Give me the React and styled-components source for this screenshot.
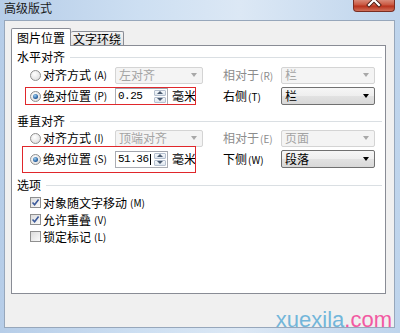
import React from "react"
import styled, { createGlobalStyle } from "styled-components"

const GlobalStyle = createGlobalStyle`
  html, body {
    margin: 0;
    padding: 0;
  }
  body {
    width: 400px;
    height: 333px;
    overflow: hidden;
    font-family: "Noto Sans CJK SC", "Liberation Sans", sans-serif;
    font-size: 12px;
    color: #000;
  }
`

const Window = styled.div`
  position: relative;
  width: 400px;
  height: 333px;
  box-sizing: border-box;
  display: flex;
  flex-direction: column;
  padding: 0 5px 5px 4px;
  overflow: hidden;
  background: linear-gradient(to right, #b6cde8, #cddff2 35%, #dce8f5 60%, #bed4ec);
`

const TitleBar = styled.div`
  display: flex;
  justify-content: space-between;
  align-items: flex-start;
  height: 20px;
`

const Title = styled.div`
  line-height: 16px;
  padding-top: 0;
  color: #1a1a1a;
`

const CloseButton = styled.div`
  width: 42px;
  height: 12px;
  box-sizing: border-box;
  border: 1px solid #7a2d22;
  border-top: none;
  border-radius: 0 0 4px 4px;
  background: linear-gradient(#d98a78, #c9563f 45%, #b8321c 55%, #d0705a);
  display: flex;
  justify-content: center;
  overflow: hidden;
`

const Body = styled.div`
  flex: 1;
  box-sizing: border-box;
  background: #f0f0f0;
  border: 1px solid #97a7bb;
  padding: 7px 0 0 6px;
`

const TabStrip = styled.div`
  position: relative;
  z-index: 1;
  display: flex;
  align-items: flex-end;
  height: 18px;
  margin-bottom: -1px;
`

const Tab = styled.div`
  box-sizing: border-box;
  height: ${p => (p.$active ? "18px" : "14px")};
  margin-bottom: ${p => (p.$active ? "0" : "1px")};
  padding: 0 ${p => (p.$active ? "5px" : "2px")};
  border: 1px solid #898c95;
  border-bottom: none;
  border-left: ${p => (p.$active ? "1px solid #898c95" : "none")};
  border-radius: 2px 2px 0 0;
  background: ${p => (p.$active ? "#fff" : "linear-gradient(#f4f4f4, #e3e3e3)")};
  line-height: ${p => (p.$active ? "17px" : "13px")};
  white-space: nowrap;
`

const Panel = styled.div`
  width: 375px;
  height: 249px;
  box-sizing: border-box;
  border: 1px solid #898c95;
  background: #fff;
  padding: 4px 0 0 0;
`

const GroupHeader = styled.div`
  display: flex;
  align-items: center;
  gap: 5px;
  height: 14px;
  line-height: 14px;
  padding: 0 3px 0 5px;
  margin-top: ${p => p.$gap || 0}px;

  &::after {
    content: "";
    flex: 1;
    height: 1px;
    background: #dadfe3;
  }
`

const Row = styled.div`
  display: flex;
  align-items: center;
  height: ${p => p.$h}px;
  padding-left: 18px;
  line-height: 14px;
`

const LeftGroup = styled.div`
  position: relative;
  display: flex;
  align-items: center;
  align-self: stretch;

  &::before {
    content: "";
    display: ${p => (p.$mark ? "block" : "none")};
    position: absolute;
    left: ${p => p.$mark?.left}px;
    right: 7px;
    top: ${p => p.$mark?.top}px;
    bottom: ${p => p.$mark?.bottom}px;
    border: 1px solid #e0272b;
    pointer-events: none;
  }
`

const Choice = styled.div`
  display: flex;
  align-items: center;
  gap: 2px;
  width: 85px;
  color: ${p => (p.$disabled ? "#6d6d6d" : "#000")};
  white-space: nowrap;
`

const Radio = styled.span`
  position: relative;
  width: 11px;
  height: 11px;
  box-sizing: border-box;
  border-radius: 50%;
  border: 1px solid #8f8f8f;
  background: radial-gradient(circle at 40% 35%, #fff, #e4e4e4 70%, #cfcfcf);

  &::after {
    content: "";
    display: ${p => (p.$checked ? "block" : "none")};
    position: absolute;
    left: 2px;
    top: 2px;
    width: 5px;
    height: 5px;
    border-radius: 50%;
    background: radial-gradient(circle at 40% 35%, #9fd0f0, #2a64a4 60%, #173a6a);
  }
`

const Key = styled.span`
  font-size: 10px;
  margin-left: 1px;
`

const Select = styled.div`
  position: relative;
  width: ${p => p.$w}px;
  height: ${p => p.$h || 17}px;
  box-sizing: border-box;
  border: 1px solid ${p => (p.$disabled ? "#d4d4d4" : "#707070")};
  border-radius: 2px;
  background: ${p =>
    p.$disabled ? "#f4f4f4" : "linear-gradient(#f6f6f6, #eeeeee 50%, #e2e2e2 50%, #d8d8d8)"};
  color: ${p => (p.$disabled ? "#a3a3a3" : "#000")};
  padding-left: 3px;
  line-height: ${p => (p.$h || 17) - 3}px;
  white-space: nowrap;

  &::after {
    content: "";
    position: absolute;
    right: 5px;
    top: 50%;
    margin-top: -2px;
    border-left: 3.5px solid transparent;
    border-right: 3.5px solid transparent;
    border-top: 4px solid ${p => (p.$disabled ? "#a8a8a8" : "#000")};
  }
`

const RightLabel = styled.div`
  width: 58px;
  margin-left: 20px;
  color: ${p => (p.$disabled ? "#8c8c8c" : "#000")};
  white-space: nowrap;
`

const SpinBox = styled.div`
  display: flex;
  width: 53px;
  height: 17px;
  box-sizing: border-box;
  border: 1px solid #abadb3;
  border-top-color: #a2a5ad;
  background: #fff;
`

const SpinValue = styled.div`
  flex: 1;
  display: flex;
  align-items: center;
  padding-left: 2px;
  font-family: "Liberation Mono", monospace;
  font-size: 11px;
  letter-spacing: -0.5px;
`

const Caret = styled.span`
  display: inline-block;
  width: 1px;
  height: 11px;
  background: #000;
  margin-left: 1px;
`

const SpinButtons = styled.div`
  display: flex;
  flex-direction: column;
  width: 12px;
  margin: 1px 1px 1px 0;
  gap: 1px;
`

const SpinButton = styled.div`
  flex: 1;
  position: relative;
  border: 1px solid #b5c0cf;
  border-radius: 1px;
  background: linear-gradient(#f5f8fb, #dfe6ee);

  &::after {
    content: "";
    position: absolute;
    left: 50%;
    top: 50%;
    margin-left: -3px;
    margin-top: -1.5px;
    border-left: 3px solid transparent;
    border-right: 3px solid transparent;
    ${p =>
      p.$up ? "border-bottom: 3px solid #4a5a70;" : "border-top: 3px solid #4a5a70;"}
  }
`

const Unit = styled.div`
  margin-left: 4px;
`

const CheckRow = styled.div`
  display: flex;
  align-items: center;
  gap: 2px;
  height: 17px;
  padding-left: 18px;
  margin-top: ${p => p.$gap || 0}px;
  line-height: 14px;
`

const CheckBox = styled.span`
  display: flex;
  align-items: center;
  justify-content: center;
  width: 11px;
  height: 11px;
  box-sizing: border-box;
  border: 1px solid #8f8f8f;
  background: linear-gradient(135deg, #dcdcdc, #fafafa);
`

const Watermark = styled.div`
  position: absolute;
  right: 8px;
  bottom: 2px;
  font-family: "Liberation Sans", Arial, sans-serif;
  font-size: 22px;
  line-height: 22px;
  color: #72b6da;
`

const Pink = styled.span`
  color: #f25aa2;
`

const Check = () => (
  <svg width="9" height="9" viewBox="0 0 9 9">
    <path d="M1.5 4.5 L3.6 6.8 L7.6 1.6" fill="none" stroke="#3c5a9a" strokeWidth="1.6" />
  </svg>
)

const CloseGlyph = () => (
  <svg width="16" height="11" viewBox="0 0 16 11">
    <path d="M3 -5 L13 5 M13 -5 L3 5" stroke="#4a1a12" strokeWidth="4" strokeLinecap="square" />
    <path d="M3 -5 L13 5 M13 -5 L3 5" stroke="#fff" strokeWidth="2.2" strokeLinecap="square" />
  </svg>
)

const Label = ({ text, k }) => (
  <>
    {text}
    <Key>({k})</Key>
  </>
)

export default function App() {
  return (
    <Window>
      <GlobalStyle />
      <TitleBar>
        <Title>高级版式</Title>
        <CloseButton>
          <CloseGlyph />
        </CloseButton>
      </TitleBar>
      <Body>
        <TabStrip>
          <Tab $active>图片位置</Tab>
          <Tab>文字环绕</Tab>
        </TabStrip>
        <Panel>
          <GroupHeader>水平对齐</GroupHeader>
          <Row $h={22}>
            <LeftGroup>
              <Choice>
                <Radio />
                <Label text="对齐方式" k="A" />
              </Choice>
              <Select $w={88} $disabled>左对齐</Select>
            </LeftGroup>
            <RightLabel $disabled>
              <Label text="相对于" k="R" />
            </RightLabel>
            <Select $w={94} $disabled>栏</Select>
          </Row>
          <Row $h={20}>
            <LeftGroup $mark={{ left: -5, top: 1, bottom: 1 }}>
              <Choice>
                <Radio $checked />
                <Label text="绝对位置" k="P" />
              </Choice>
              <SpinBox>
                <SpinValue>0.25</SpinValue>
                <SpinButtons>
                  <SpinButton $up />
                  <SpinButton />
                </SpinButtons>
              </SpinBox>
              <Unit>毫米</Unit>
              <div style={{ width: 7 }} />
            </LeftGroup>
            <RightLabel>
              <Label text="右侧" k="T" />
            </RightLabel>
            <Select $w={94} $h={18}>栏</Select>
          </Row>

          <GroupHeader $gap={8}>垂直对齐</GroupHeader>
          <Row $h={20}>
            <LeftGroup>
              <Choice>
                <Radio />
                <Label text="对齐方式" k="I" />
              </Choice>
              <Select $w={88} $disabled>顶端对齐</Select>
            </LeftGroup>
            <RightLabel $disabled>
              <Label text="相对于" k="E" />
            </RightLabel>
            <Select $w={94} $disabled>页面</Select>
          </Row>
          <Row $h={22}>
            <LeftGroup $mark={{ left: -8, top: -2, bottom: -3 }}>
              <Choice>
                <Radio $checked />
                <Label text="绝对位置" k="S" />
              </Choice>
              <SpinBox>
                <SpinValue>
                  51.36
                  <Caret />
                </SpinValue>
                <SpinButtons>
                  <SpinButton $up />
                  <SpinButton />
                </SpinButtons>
              </SpinBox>
              <Unit>毫米</Unit>
              <div style={{ width: 7 }} />
            </LeftGroup>
            <RightLabel>
              <Label text="下侧" k="W" />
            </RightLabel>
            <Select $w={94} $h={18}>段落</Select>
          </Row>

          <GroupHeader $gap={8}>选项</GroupHeader>
          <CheckRow $gap={2}>
            <CheckBox>
              <Check />
            </CheckBox>
            <Label text="对象随文字移动" k="M" />
          </CheckRow>
          <CheckRow>
            <CheckBox>
              <Check />
            </CheckBox>
            <Label text="允许重叠" k="V" />
          </CheckRow>
          <CheckRow>
            <CheckBox />
            <Label text="锁定标记" k="L" />
          </CheckRow>
        </Panel>
      </Body>
      <Watermark>
        xuexila<Pink>.com</Pink>
      </Watermark>
    </Window>
  )
}
